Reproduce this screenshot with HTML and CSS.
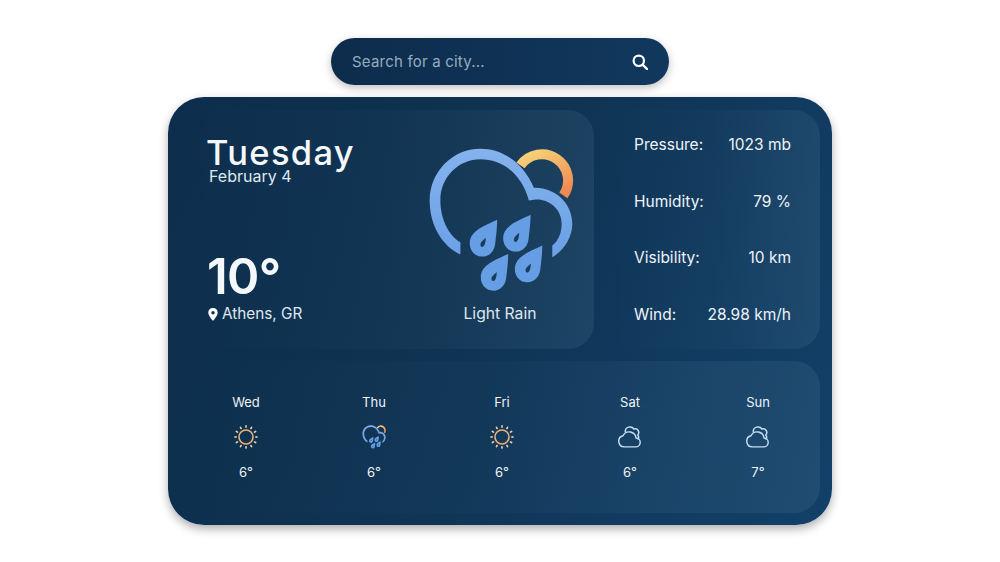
FILE: index.html
```html
<!DOCTYPE html>
<html lang="en">
<head>
<meta charset="utf-8">
<title>Weather</title>
<link rel="stylesheet" href="styles.css">
</head>
<body>
<svg class="defs" width="0" height="0" aria-hidden="true">
  <defs>
    <linearGradient id="sunGrad" x1="0.2" y1="0" x2="0.8" y2="1">
      <stop offset="0" stop-color="#f6cf76"/>
      <stop offset="1" stop-color="#ee8a52"/>
    </linearGradient>
    <linearGradient id="cloudGrad" x1="0" y1="0" x2="0" y2="1">
      <stop offset="0" stop-color="#85b2ee"/>
      <stop offset="1" stop-color="#6aa0e6"/>
    </linearGradient>
    <path id="drop" fill-rule="evenodd" d="M290 268C255 285 208 300 208 338C208 362 225 378 245 378C270 378 282 358 284 340C287 315 290 295 290 268ZM256 322C250 328 240 334 240 343C240 347 243 349 246 349C252 349 255 338 256 322Z"/>
    <symbol id="rain" viewBox="80 50 440 440">
      <path d="M360 105A78 78 0 1 1 488 195" fill="none" stroke="url(#sunGrad)" stroke-width="30"/>
      <path fill="url(#cloudGrad)" d="M180 372C125 345 88 285 88 210C88 125 155 55 240 55C310 55 370 100 400 172C465 170 515 220 515 280C515 320 490 360 455 380L455 345C475 330 483 305 483 280C483 235 445 205 405 207L385 210C365 135 310 87 240 87C175 87 120 140 120 210C120 265 145 315 180 335Z"/>
      <g fill="#659ee4">
        <use href="#drop"/>
        <use href="#drop" x="100" y="-15"/>
        <use href="#drop" x="33" y="102"/>
        <use href="#drop" x="135" y="77"/>
      </g>
    </symbol>
    <symbol id="sun" viewBox="0 0 24 24">
      <circle cx="12" cy="12" r="7" fill="none" stroke="#eeb178" stroke-width="1.6"/>
      <g stroke-width="1.6" stroke-linecap="round" stroke="#f0d2ae">
        <path d="M12 2.2V.9M12 21.8v1.3M2.2 12H.9M21.8 12h1.3M16.9 3.5l.65-1.1M7.1 20.5l-.65 1.1M20.5 7.1l1.1-.65M3.5 16.9l-1.1.65M7.1 3.5L6.45 2.4M16.9 20.5l.65 1.1M3.5 7.1L2.4 6.45M20.5 16.9l1.1.65"/>
      </g>
    </symbol>
    <symbol id="cloud" viewBox="0 0 25 25">
      <g fill="none" stroke="#c3e0f6" stroke-width="1.5" stroke-linejoin="round" stroke-linecap="round">
        <path d="M6.5 22.8H18.2A4.6 4.6 0 0 0 18.8 13.6A7.2 7.2 0 0 0 5.2 11.2A5.9 5.9 0 0 0 6.5 22.8Z"/>
        <path d="M7.5 6.9A5 5 0 0 1 16.6 4.2A3.8 3.8 0 0 1 20.6 10.4A3.4 3.4 0 0 1 20.8 14.6"/>
      </g>
    </symbol>
  </defs>
</svg>

<form class="search">
  <span class="search-text">Search for a city...</span>
  <svg class="search-icon" viewBox="0 0 16 16" aria-hidden="true">
    <circle cx="6.8" cy="6.8" r="5.2" fill="none" stroke="#fff" stroke-width="2.2"/>
    <path d="M10.8 10.8L15 15" stroke="#fff" stroke-width="2.4" stroke-linecap="round"/>
  </svg>
</form>

<main class="card">
  <div class="top">
    <section class="panel today">
      <div class="today-info">
        <div class="date">
          <h1 class="day">Tuesday</h1>
          <p class="full-date">February 4</p>
        </div>
        <div class="now">
          <p class="temp">10°</p>
          <p class="place">
            <svg class="pin" viewBox="0 0 10 13" aria-hidden="true"><path fill="#fff" fill-rule="evenodd" d="M5 0C2.2 0 .3 2 .3 4.6C.3 7.6 3.4 11 5 13C6.6 11 9.7 7.6 9.7 4.6C9.7 2 7.8 0 5 0ZM5 3A1.7 1.7 0 1 1 5 6.4A1.7 1.7 0 0 1 5 3Z"/></svg>
            Athens, GR
          </p>
        </div>
      </div>
      <div class="today-sky">
        <svg class="big-icon" aria-hidden="true"><use href="#rain"/></svg>
        <p class="sky-label">Light Rain</p>
      </div>
    </section>
    <section class="panel stats">
      <div class="stat"><span>Pressure:</span><span>1023 mb</span></div>
      <div class="stat"><span>Humidity:</span><span>79 %</span></div>
      <div class="stat"><span>Visibility:</span><span>10 km</span></div>
      <div class="stat"><span>Wind:</span><span>28.98 km/h</span></div>
    </section>
  </div>
  <section class="panel forecast">
    <div class="fday"><span class="fname">Wed</span><svg class="ficon" aria-hidden="true"><use href="#sun"/></svg><span class="ftemp">6°</span></div>
    <div class="fday"><span class="fname">Thu</span><svg class="ficon" aria-hidden="true"><use href="#rain"/></svg><span class="ftemp">6°</span></div>
    <div class="fday"><span class="fname">Fri</span><svg class="ficon" aria-hidden="true"><use href="#sun"/></svg><span class="ftemp">6°</span></div>
    <div class="fday"><span class="fname">Sat</span><svg class="ficon" aria-hidden="true"><use href="#cloud"/></svg><span class="ftemp">6°</span></div>
    <div class="fday"><span class="fname">Sun</span><svg class="ficon" aria-hidden="true"><use href="#cloud"/></svg><span class="ftemp">7°</span></div>
  </section>
</main>
</body>
</html>
```
FILE: styles.css
```css
* { box-sizing: border-box; margin: 0; padding: 0; }

html, body { height: 100%; }

body {
  background: #fff;
  font-family: "Inter", "Open Sans", sans-serif;
  color: #f4f8fb;
  display: flex;
  flex-direction: column;
  align-items: center;
  padding-top: 38px;
  overflow: hidden;
}

.defs { position: absolute; }

.search {
  width: 338px;
  height: 47px;
  border-radius: 24px;
  background: linear-gradient(90deg, #0d2c4c, #11385d);
  box-shadow: 0 3px 8px rgba(0, 0, 0, .25);
  display: flex;
  align-items: center;
  justify-content: space-between;
  padding: 0 21px;
  margin-bottom: 12px;
}

.search-text { font-size: 15px; color: #96abc0; letter-spacing: .2px; }
.search-icon { width: 16px; height: 16px; }

.card {
  width: 664px;
  height: 428px;
  border-radius: 36px;
  background: linear-gradient(115deg, #0d2d4c 0%, #0f3352 45%, #113c62 80%, #124068 100%);
  box-shadow: 0 4px 10px rgba(0, 0, 0, .32);
  padding: 13px 12px 12px;
  display: flex;
  flex-direction: column;
  gap: 12px;
}

.top { display: flex; gap: 12px; height: 239px; }

.panel {
  background: linear-gradient(90deg, rgba(190, 225, 240, 0), rgba(190, 225, 240, .02) 50%, rgba(190, 225, 240, .08));
  border-radius: 0 26px 26px 0;
}

.today { width: 414px; display: flex; justify-content: space-between; }

.today-info {
  padding: 28px 0 25px 26px;
  display: flex;
  flex-direction: column;
  justify-content: space-between;
}

.day { font-size: 34.5px; line-height: 30px; font-weight: 500; letter-spacing: 1.3px; }
.full-date { font-size: 16px; line-height: 18px; margin: -1.5px 0 0 3px; color: #dfe8ef; }

.temp { font-size: 49px; line-height: 54px; font-weight: 600; letter-spacing: -.6px; margin-left: 1px; }
.place { display: flex; align-items: center; gap: 4px; font-size: 15.3px; line-height: 20px; color: #dfe8ef; margin-left: 1px; }
.pin { width: 10px; height: 13px; margin-left: 1px; }

.today-sky {
  width: 188px;
  padding-top: 37px;
  display: flex;
  flex-direction: column;
  align-items: center;
}

.big-icon { width: 147px; height: 147px; display: block; }
.sky-label { font-size: 15.7px; line-height: 20px; margin-top: 10px; color: #dfe8ef; }

.stats {
  width: 214px;
  padding: 23px 29px 22px 28px;
  display: flex;
  flex-direction: column;
  justify-content: space-between;
}

.stat {
  display: flex;
  justify-content: space-between;
  font-size: 15.5px;
  line-height: 24px;
  color: #eef3f7;
}

.forecast {
  height: 152px;
  display: grid;
  grid-template-columns: repeat(5, 128px);
  padding-top: 32px;
  padding-left: 2px;
  border-radius: 0 26px 26px 0;
}

.fday { display: flex; flex-direction: column; align-items: center; }
.fname { font-size: 13px; line-height: 18px; color: #eef3f7; }
.ficon { width: 24px; height: 24px; margin: 14px 0 14px; display: block; }
.ftemp { font-size: 13px; line-height: 18px; color: #eef3f7; }
```
